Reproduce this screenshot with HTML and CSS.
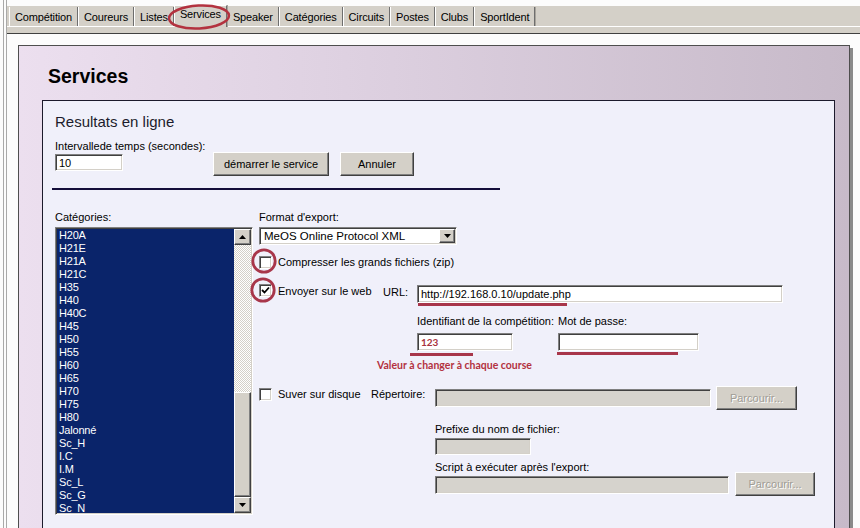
FILE: index.html
```html
<!DOCTYPE html>
<html lang="fr">
<head>
<meta charset="utf-8">
<title>Services</title>
<link rel="stylesheet" href="styles.css">
</head>
<body>
<div class="app">
  <div class="tabbar">
    <div class="tabs">
      <span class="tab">Compétition</span>
      <span class="tab">Coureurs</span>
      <span class="tab">Listes</span>
      <span class="tab active">Services<svg class="ring-tab" width="66" height="30" viewBox="0 0 66 30"><ellipse cx="33" cy="15" rx="30" ry="11.5" transform="rotate(-3 33 15)" fill="none" stroke="#b3323f" stroke-width="2.5"/></svg></span>
      <span class="tab">Speaker</span>
      <span class="tab">Catégories</span>
      <span class="tab">Circuits</span>
      <span class="tab">Postes</span>
      <span class="tab">Clubs</span>
      <span class="tab">SportIdent</span>
    </div>
    <div class="tab-page"></div>
  </div>
  <div class="page">
    <div class="panel">
      <h1 class="title">Services</h1>
      <div class="box">
        <h2 class="subtitle">Resultats en ligne</h2>
        <div class="label label-interval">Intervallede temps (secondes):</div>
        <div class="interval-row">
          <div class="field field-interval">10</div>
          <div class="btn btn-start">démarrer le service</div>
          <div class="btn btn-cancel">Annuler</div>
        </div>
        <div class="rule"></div>
        <div class="cols">
          <div class="col-left">
            <div class="label">Catégories:</div>
            <div class="listbox">
              <ul class="items">
                <li>H20A</li><li>H21E</li><li>H21A</li><li>H21C</li><li>H35</li><li>H40</li><li>H40C</li><li>H45</li><li>H50</li><li>H55</li><li>H60</li><li>H65</li><li>H70</li><li>H75</li><li>H80</li><li>Jalonné</li><li>Sc_H</li><li>I.C</li><li>I.M</li><li>Sc_L</li><li>Sc_G</li><li>Sc_N</li>
              </ul>
              <div class="scrollbar">
                <div class="raised sb-btn"><svg width="7" height="4" viewBox="0 0 7 4"><path d="M3.5 0 L7 4 L0 4 Z" fill="#000"/></svg></div>
                <div class="sb-track"></div>
                <div class="raised sb-thumb"></div>
                <div class="raised sb-btn"><svg width="7" height="4" viewBox="0 0 7 4"><path d="M0 0 L7 0 L3.5 4 Z" fill="#000"/></svg></div>
              </div>
            </div>
          </div>
          <div class="col-right">
            <div class="label">Format d'export:</div>
            <div class="select">
              <span class="select-text">MeOS Online Protocol XML</span>
              <span class="raised select-btn"><svg width="7" height="4" viewBox="0 0 7 4"><path d="M0 0 L7 0 L3.5 4 Z" fill="#000"/></svg></span>
            </div>
            <div class="check-row row-zip">
              <span class="check"><svg class="ring ring-zip" width="26" height="26" viewBox="0 0 26 26"><circle cx="13" cy="13" r="11.2" fill="none" stroke="#a8364a" stroke-width="2.8"/></svg></span>
              <span class="check-label">Compresser les grands fichiers (zip)</span>
            </div>
            <div class="web-row">
              <div class="check-row">
                <span class="check"><svg class="tick" width="9" height="9" viewBox="0 0 9 9"><path d="M1 4 L3.5 6.5 L8 1.5" fill="none" stroke="#000" stroke-width="1.8"/></svg><svg class="ring ring-web" width="26" height="26" viewBox="0 0 26 26"><circle cx="13" cy="13" r="11.2" fill="none" stroke="#a8364a" stroke-width="2.8"/></svg></span>
                <span class="check-label">Envoyer sur le web</span>
              </div>
              <span class="url-label">URL:</span>
              <div class="field field-url">http://192.168.0.10/update.php<span class="mark mark-url"></span></div>
            </div>
            <div class="id-block">
              <div class="id-col">
                <div class="label">Identifiant de la compétition:</div>
                <div class="field field-id"><span class="id-value">123</span><span class="mark mark-id"></span></div>
              </div>
              <div class="pw-col">
                <div class="label">Mot de passe:</div>
                <div class="field field-pw"><span class="mark mark-pw"></span></div>
              </div>
            </div>
            <div class="note">Valeur à changer à chaque course</div>
            <div class="disk-row">
              <div class="check-row">
                <span class="check"></span>
                <span class="check-label">Suver sur disque</span>
              </div>
              <span class="dir-label">Répertoire:</span>
              <div class="field disabled field-dir"></div>
              <div class="btn btn-disabled btn-browse1">Parcourir...</div>
            </div>
            <div class="sub-block prefix-block">
              <div class="label">Prefixe du nom de fichier:</div>
              <div class="field disabled field-prefix"></div>
            </div>
            <div class="sub-block script-block">
              <div class="script-main">
                <div class="label">Script à exécuter après l'export:</div>
                <div class="field disabled field-script"></div>
              </div>
              <div class="btn btn-disabled btn-browse2">Parcourir...</div>
            </div>
          </div>
        </div>
      </div>
    </div>
  </div>
</div>
</body>
</html>
```
FILE: styles.css
```css
* { box-sizing: border-box; }
html, body { margin: 0; padding: 0; }
body {
  width: 860px;
  height: 528px;
  overflow: hidden;
  background: #fcfcfc;
  font-family: "Liberation Sans", Arial, sans-serif;
  font-size: 11px;
  color: #000;
}
.app {
  height: 528px;
  margin-left: 3px;
  border-left: 4px double #a9a9a9;
  padding-top: 6px;
}

/* Tabs */
.tabbar { background: #d4d0c8; }
.tabs {
  display: flex;
  align-items: flex-end;
  height: 20px;
  padding-left: 2px;
}
.tab {
  height: 19px;
  padding: 1px 5px 0;
  line-height: 18px;
  letter-spacing: -0.15px;
  border-left: 1px solid #fff;
  border-right: 1px solid #6e6e6e;
  box-shadow: 1px 0 0 #a8a49c;
  white-space: nowrap;
}
.tab.active {
  position: relative;
  z-index: 1;
  height: 22px;
  margin-bottom: -1px;
  padding: 0 5px;
  line-height: 17px;
  border-top: 1px solid #fff;
  background: #d4d0c8;
}
.ring-tab {
  position: absolute;
  left: 50%;
  top: -4px;
  margin-left: -34px;
}
.tab-page {
  height: 8px;
  border-top: 1px solid #fff;
  border-bottom: 1px solid #404040;
}

/* Panel */
.page { padding: 11px 0 0 11px; }
.panel {
  width: 832px;
  height: 520px;
  border: 1px solid #4e4e4e;
  box-shadow: 3px 3px 0 #8a8a8a;
  background: linear-gradient(90deg, #ecdfef 0%, #dccfdf 45%, #c7bac9 100%);
  padding: 18px 14px 0 23px;
}
.title {
  margin: 0;
  padding-left: 6px;
  height: 24px;
  font-size: 19.5px;
  line-height: 24px;
  font-weight: bold;
  color: #000;
}
.box {
  margin-top: 12px;
  height: 460px;
  border: 1px solid #1c1a2c;
  background: #f0f0fa;
  padding: 12px 0 0 12px;
}
.subtitle {
  margin: 0;
  font-size: 15px;
  line-height: 18px;
  font-weight: normal;
  color: #1c1c2c;
}
.label { line-height: 13px; white-space: nowrap; }
.label-interval { margin-top: 9px; }

/* Common controls */
.field {
  position: relative;
  height: 18px;
  background: #fff;
  border: 1px solid;
  border-color: #808080 #fff #fff #808080;
  box-shadow: inset 1px 1px 0 #404040, inset -1px -1px 0 #d4d0c8;
  padding: 2px 0 0 3px;
  line-height: 13px;
  white-space: nowrap;
}
.field.disabled { background: #d6d3cd; }
.raised {
  background: #d4d0c8;
  border: 1px solid;
  border-color: #fff #404040 #404040 #fff;
  box-shadow: inset -1px -1px 0 #808080;
}
.btn {
  height: 24px;
  background: #d4d0c8;
  border: 1px solid;
  border-color: #fff #404040 #404040 #fff;
  box-shadow: inset -1px -1px 0 #808080;
  display: flex;
  align-items: center;
  justify-content: center;
  white-space: nowrap;
  color: #000;
}
.btn-disabled {
  color: #a09d96;
  text-shadow: 1px 1px 0 #fff;
}

/* Interval row */
.interval-row {
  display: flex;
  align-items: flex-start;
  margin-top: 1px;
}
.field-interval { width: 68px; height: 17px; }
.btn-start { width: 116px; margin: -2px 0 0 90px; }
.btn-cancel { width: 74px; margin: -2px 0 0 11px; }
.rule {
  margin: 12px 0 0 -3px;
  width: 448px;
  height: 2px;
  background: #140e3a;
}

/* Columns */
.cols { display: flex; margin-top: 21px; }
.col-left { width: 198px; }
.col-right {
  margin-left: 6px;
  display: flex;
  flex-direction: column;
}

/* List box */
.listbox {
  margin-top: 3px;
  height: 288px;
  display: flex;
  border: 1px solid;
  border-color: #808080 #fff #fff #808080;
  box-shadow: inset 1px 1px 0 #404040, inset -1px -1px 0 #d4d0c8;
  padding: 1px;
}
.items {
  flex: 1;
  margin: 0;
  padding: 0 0 0 2px;
  list-style: none;
  background: #0a246a;
  color: #fff;
  overflow: hidden;
}
.items li {
  height: 13px;
  line-height: 13px;
  font-size: 11px;
  letter-spacing: -0.2px;
}
.scrollbar {
  width: 17px;
  display: flex;
  flex-direction: column;
}
.sb-btn {
  height: 16px;
  display: flex;
  align-items: center;
  justify-content: center;
}
.sb-track {
  height: 147px;
  background: repeating-conic-gradient(#d4d0c8 0 25%, #ffffff 0 50%) 0 0 / 2px 2px;
}
.sb-thumb { height: 105px; }

/* Right column */
.select {
  margin-top: 3px;
  width: 198px;
  height: 18px;
  display: flex;
  background: #fff;
  border: 1px solid;
  border-color: #808080 #fff #fff #808080;
  box-shadow: inset 1px 1px 0 #404040, inset -1px -1px 0 #d4d0c8;
  padding: 1px;
}
.select-text {
  flex: 1;
  padding-left: 3px;
  font-size: 11.5px;
  line-height: 14px;
  white-space: nowrap;
}
.select-btn {
  width: 16px;
  display: flex;
  align-items: center;
  justify-content: center;
}
.check-row { display: flex; align-items: flex-start; }
.row-zip { margin-top: 11px; }
.check {
  position: relative;
  flex: none;
  width: 13px;
  height: 13px;
  background: #fff;
  border: 1px solid;
  border-color: #808080 #fff #fff #808080;
  box-shadow: inset 1px 1px 0 #404040, inset -1px -1px 0 #d4d0c8;
}
.tick { position: absolute; left: 1px; top: 1px; }
.ring { position: absolute; pointer-events: none; }
.ring-zip { left: -9px; top: -9px; }
.ring-web { left: -10px; top: -8px; }
.check-label {
  margin-left: 6px;
  line-height: 13px;
  white-space: nowrap;
}

.web-row {
  display: grid;
  grid-template-columns: 124px 34px 366px;
  align-items: start;
  margin-top: 15px;
}
.web-row .check-label { margin-top: 1px; }
.url-label { margin-top: 2px; line-height: 13px; }
.field-url { margin-top: 1px; }
.mark {
  position: absolute;
  height: 3px;
  background: #a8364a;
}
.mark-url { left: 0; top: calc(100% + 1px); width: 149px; }

.id-block {
  display: flex;
  margin: 12px 0 0 158px;
}
.id-col { width: 141px; }
.id-col .field, .pw-col .field { margin-top: 5px; }
.field-id { width: 96px; }
.field-pw { width: 141px; }
.id-value {
  font-family: Lato, "Liberation Sans", sans-serif;
  font-weight: bold;
  font-size: 10px;
  color: #a8323e;
}
.mark-id { left: -8px; top: calc(100% + 3px); width: 63px; }
.mark-pw { left: -2px; top: calc(100% + 2px); width: 121px; }

.note {
  margin: 8px 0 0 118px;
  font-family: Lato, "Liberation Sans", sans-serif;
  font-weight: bold;
  font-size: 10.5px;
  line-height: 13px;
  color: #b3323f;
  white-space: nowrap;
}

.disk-row {
  display: flex;
  align-items: flex-start;
  margin-top: 14px;
}
.disk-row .check-row { width: 112px; margin-top: 2px; }
.dir-label { width: 64px; margin-top: 2px; line-height: 13px; }
.field-dir { width: 276px; margin-top: 3px; }
.btn-browse1 { width: 81px; margin-left: 5px; }

.sub-block { margin-left: 176px; }
.prefix-block { margin-top: 13px; }
.sub-block .field { margin-top: 2px; }
.field-prefix { width: 96px; height: 17px; }
.script-block {
  display: flex;
  align-items: flex-end;
  margin-top: 6px;
}
.field-script { width: 294px; }
.btn-browse2 { width: 80px; margin: 0 0 -2px 6px; }
```
